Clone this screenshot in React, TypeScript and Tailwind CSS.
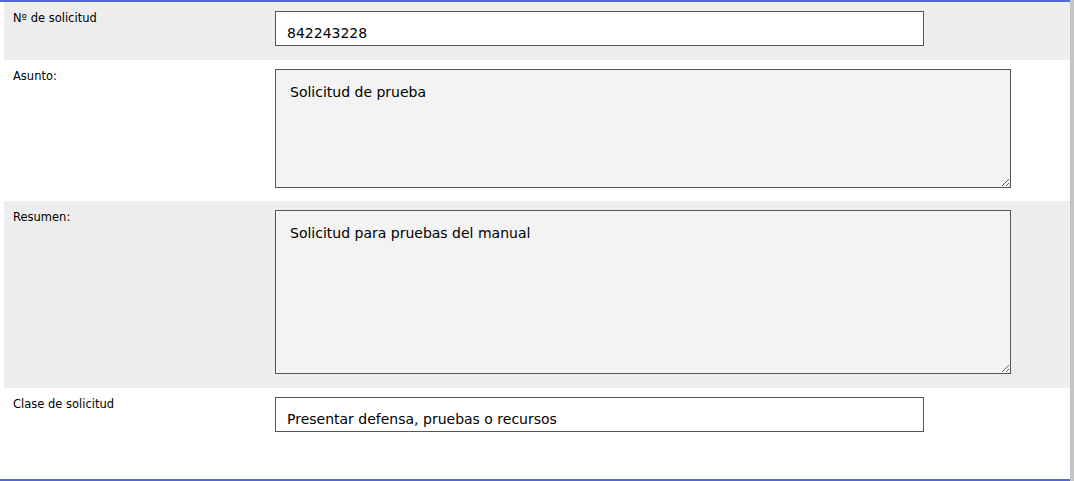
const font = "font-['DejaVu_Sans',Verdana,sans-serif]";
const inputCls = `w-[649px] h-[35px] border border-[#555] bg-white pl-[11px] pt-[12px] pb-[4px] text-[14px] text-black outline-none ${font}`;
const areaCls = `block w-[736px] border border-[#555] bg-[#f3f3f3] pl-[14px] pt-[14px] text-[14px] leading-[17px] text-black outline-none resize ${font}`;

function Row({ label, gray, children, extra = "pb-[14px]" }: { label: string; gray?: boolean; children: React.ReactNode; extra?: string }) {
  return (
    <div className={`grid grid-cols-[262px_1fr] pl-[9px] pt-[9px] ${gray ? "bg-[#ededed]" : "bg-white"} ${extra}`}>
      <div className="text-[11.5px] leading-[15px] text-black">{label}</div>
      <div>{children}</div>
    </div>
  );
}

export default function App() {
  return (
    <div className={`flex h-[481px] w-[1074px] bg-white ${font}`}>
      <div className="flex flex-1 flex-col border-t-2 border-b-2 border-[#5468d4] pl-1">
        <Row label="Nº de solicitud" gray>
          <input readOnly defaultValue="842243228" className={inputCls} />
        </Row>
        <Row label="Asunto:" extra="pb-[13px]">
          <textarea readOnly defaultValue="Solicitud de prueba" className={`${areaCls} h-[119px]`} />
        </Row>
        <Row label="Resumen:" gray>
          <textarea readOnly defaultValue="Solicitud para pruebas del manual" className={`${areaCls} h-[164px]`} />
        </Row>
        <Row label="Clase de solicitud" extra="flex-1">
          <input readOnly defaultValue="Presentar defensa, pruebas o recursos" className={inputCls} />
        </Row>
      </div>
      <div className="w-1 bg-[#c4c4c4]" />
    </div>
  );
}
